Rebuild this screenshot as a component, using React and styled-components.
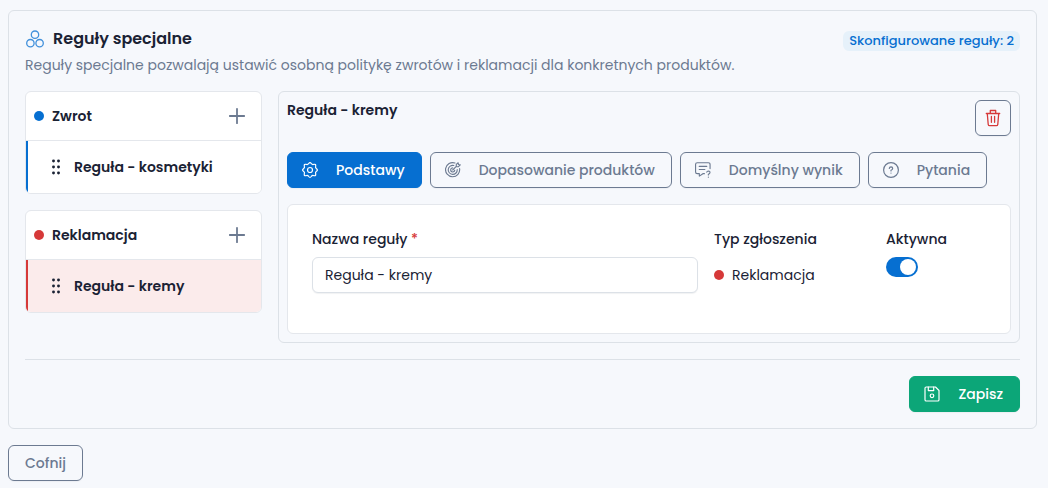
import React, { useState } from "react";
import styled, { createGlobalStyle, ThemeProvider } from "styled-components";

const theme = {
  page: "#f6f8fc",
  surface: "#ffffff",
  text: "#1a2234",
  muted: "#6c7a91",
  border: "#dce1e7",
  softBorder: "#e4e7ec",
  blue: "#066fd1",
  red: "#d63939",
  green: "#0ca678",
};

const GlobalStyle = createGlobalStyle`
  *, *::before, *::after { box-sizing: border-box; }
  body {
    margin: 0;
    background: ${theme.page};
    color: ${theme.text};
    font: 400 14px/20px Poppins, Inter, "Liberation Sans", sans-serif;
  }
  button, input { font: inherit; color: inherit; }
  h1, h2, h3, p, ul { margin: 0; padding: 0; font: inherit; list-style: none; }
`;

const Page = styled.main`
  display: flex;
  flex-direction: column;
  align-items: flex-start;
  gap: 16px;
  padding: 10px 11px 7px 8px;
`;

const Card = styled.section`
  width: 100%;
  padding: 16px;
  border: 1px solid ${(p) => p.theme.border};
  border-radius: 6px;
`;

const CardHeader = styled.header`
  display: flex;
  justify-content: space-between;
  align-items: flex-start;
  padding-bottom: 16px;
`;

const TitleRow = styled.div`
  display: flex;
  align-items: center;
  gap: 8px;
  height: 24px;
  color: ${(p) => p.theme.blue};
`;

const Title = styled.h1`
  color: ${(p) => p.theme.text};
  font-size: 16px;
  line-height: 24px;
  font-weight: 600;
`;

const Subtitle = styled.p`
  color: ${(p) => p.theme.muted};
  font-size: 14px;
  line-height: 20px;
  padding-top: 4px;
`;

const Badge = styled.span`
  flex: none;
  margin-top: 4px;
  padding: 0 6px;
  border-radius: 6px;
  background: #e6f1fa;
  color: ${(p) => p.theme.blue};
  font-size: 13px;
  line-height: 20px;
  font-weight: 500;
  font-variant-ligatures: none;
`;

const Columns = styled.div`
  display: grid;
  grid-template-columns: 237fr 742fr;
  gap: 16px;
  align-items: start;
`;

const Groups = styled.nav`
  display: flex;
  flex-direction: column;
  gap: 16px;
`;

const Group = styled.section`
  overflow: hidden;
  border: 1px solid ${(p) => p.theme.softBorder};
  border-radius: 6px;
  background: ${(p) => p.theme.surface};
`;

const GroupHeader = styled.div`
  display: flex;
  align-items: center;
  gap: 8px;
  height: 49px;
  padding: 0 12px 0 8px;
  border-bottom: 1px solid ${(p) => p.theme.softBorder};
`;

const GroupTitle = styled.h2`
  flex: 1;
  font-weight: 600;
`;

const Dot = styled.span`
  flex: none;
  width: 10px;
  height: 10px;
  border-radius: 50%;
  background: ${(p) => p.theme[p.$tone]};
`;

const AddButton = styled.button`
  display: grid;
  place-items: center;
  width: 24px;
  height: 24px;
  padding: 0;
  border: 0;
  background: none;
  color: ${(p) => p.theme.muted};
  cursor: pointer;
`;

const RuleItem = styled.button`
  display: flex;
  align-items: center;
  gap: 14px;
  width: 100%;
  height: 52px;
  padding: 0 16px 0 24px;
  border: 0;
  border-left: 2px solid ${(p) => p.theme[p.$tone]};
  background: ${(p) => (p.$active ? "#fbebeb" : p.theme.surface)};
  font-weight: 600;
  text-align: left;
  cursor: pointer;
`;

const Panel = styled.section`
  padding: 8px;
  border: 1px solid ${(p) => p.theme.border};
  border-radius: 6px;
`;

const PanelHeader = styled.div`
  display: flex;
  justify-content: space-between;
  align-items: flex-start;
`;

const PanelTitle = styled.h2`
  font-weight: 600;
`;

const Button = styled.button`
  display: inline-flex;
  align-items: center;
  gap: 18px;
  height: 36px;
  padding: 0 16px 0 14px;
  border: 1px solid ${(p) => p.theme.muted};
  border-radius: 6px;
  background: transparent;
  color: ${(p) => p.theme.muted};
  font-weight: 500;
  box-shadow: 0 1px 1px rgba(24, 36, 51, 0.04);
  cursor: pointer;

  &[aria-selected="true"] {
    border-color: ${(p) => p.theme.blue};
    background: ${(p) => p.theme.blue};
    color: #ffffff;
  }
`;

const SaveButton = styled(Button)`
  border-color: ${(p) => p.theme.green};
  background: ${(p) => p.theme.green};
  color: #ffffff;
`;

const BackButton = styled(Button)`
  padding: 0 16px;
`;

const DeleteButton = styled(Button)`
  justify-content: center;
  width: 36px;
  padding: 0;
  color: ${(p) => p.theme.red};
`;

const Tabs = styled.div`
  display: flex;
  flex-wrap: wrap;
  gap: 8px;
  padding: 16px 0;
`;

const Form = styled.div`
  display: grid;
  grid-template-columns: 386fr 156fr 100fr;
  gap: 16px;
  padding: 24px 24px 40px;
  border: 1px solid ${(p) => p.theme.softBorder};
  border-radius: 6px;
  background: ${(p) => p.theme.surface};
`;

const Field = styled.div`
  display: flex;
  flex-direction: column;
  align-items: flex-start;
  gap: 8px;
`;

const Label = styled.label`
  font-weight: 500;
`;

const Required = styled.span`
  color: ${(p) => p.theme.red};
`;

const TextInput = styled.input`
  width: 100%;
  height: 36px;
  padding: 0 12px;
  border: 1px solid ${(p) => p.theme.border};
  border-radius: 6px;
  background: ${(p) => p.theme.surface};
  box-shadow: 0 1px 1px rgba(24, 36, 51, 0.06);
`;

const TypeValue = styled.div`
  display: flex;
  align-items: center;
  gap: 8px;
  height: 36px;
`;

const Switch = styled.input`
  appearance: none;
  display: flex;
  align-items: center;
  width: 32px;
  height: 20px;
  margin: 0;
  padding: 0 2px;
  border-radius: 10px;
  background: ${(p) => p.theme.border};
  cursor: pointer;

  &::before {
    content: "";
    width: 16px;
    height: 16px;
    border-radius: 50%;
    background: #ffffff;
  }
  &:checked {
    justify-content: flex-end;
    background: ${(p) => p.theme.blue};
  }
`;

const Footer = styled.footer`
  display: flex;
  justify-content: flex-end;
  margin-top: 16px;
  padding-top: 16px;
  border-top: 1px solid ${(p) => p.theme.border};
`;

const Svg = styled.svg`
  flex: none;
  display: block;
  fill: none;
  stroke: currentColor;
  stroke-width: ${(p) => p.$stroke || 1.2};
  stroke-linecap: round;
  stroke-linejoin: round;
`;

const CirclesIcon = () => (
  <Svg width="20" height="18" viewBox="0 0 20 18" $stroke={1.3} opacity="0.75" aria-hidden="true">
    <circle cx="10" cy="4.700" r="3.700" />
    <circle cx="5.400" cy="13.200" r="3.700" />
    <circle cx="14.600" cy="13.200" r="3.700" />
  </Svg>
);

const PlusIcon = () => (
  <Svg width="18" height="18" viewBox="0 0 18 18" $stroke={1.8} aria-hidden="true">
    <path d="M9 1.800v14.400M1.800 9h14.400" />
  </Svg>
);

const GripIcon = () => (
  <Svg width="8" height="16" viewBox="0 0 8 16" aria-hidden="true">
    <g fill={theme.text} stroke="none">
      {[2, 8, 14].map((y) => (
        <React.Fragment key={y}>
          <circle cx="1.500" cy={y} r="1.450" />
          <circle cx="6.500" cy={y} r="1.450" />
        </React.Fragment>
      ))}
    </g>
  </Svg>
);

const GearIcon = () => (
  <Svg width="16" height="16" viewBox="0 0 16 16" aria-hidden="true">
    <circle cx="8" cy="8" r="2.500" />
    <path d="M6.700 1.500Q8 -.3 9.300 1.500Q10.300 3 12 2.300Q14 1.900 13.700 4Q13 5.700 14.500 6.700Q16.300 8 14.500 9.300Q13 10.300 13.700 12Q14 14.100 12 13.700Q10.300 13 9.300 14.500Q8 16.300 6.700 14.500Q5.700 13 4 13.700Q1.900 14.100 2.300 12Q3 10.300 1.500 9.300Q-.3 8 1.500 6.700Q3 5.700 2.300 4Q1.900 1.900 4 2.300Q5.700 3 6.700 1.500Z" />
  </Svg>
);

const TargetIcon = () => (
  <Svg width="16" height="16" viewBox="0 0 17 17" aria-hidden="true">
    <path d="M10.600 1.100A7.500 7.500 0 1 0 15.500 7" />
    <path d="M9.400 3.700A4.800 4.800 0 1 0 13 8" />
    <path d="M8.200 6.200A2.200 2.200 0 1 0 10.400 8.700" />
    <path d="M8.200 8.500L12 4.700M12 4.700V2.600L14 .8L14.300 2.700L16.200 3L14.300 5H12" />
  </Svg>
);

const MessageIcon = () => (
  <Svg width="16" height="16" viewBox="0 0 17 17" aria-hidden="true">
    <path d="M16 7V2.600Q16 .8 14.200.8H2.400Q.6.800.6 2.600V10.600Q.6 12.400 2.400 12.400H4.600V15L8.400 12.400H10" />
    <path d="M4.500 4.700H12.500M4.500 8H10.500" />
    <path d="M12.500 10.800Q12.800 9.500 14.200 9.500Q16 9.600 15.900 11.200Q15.700 12.300 14.200 13V13.800M14.200 16V16.100" />
  </Svg>
);

const QuestionIcon = () => (
  <Svg width="16" height="16" viewBox="0 0 16 16" aria-hidden="true">
    <circle cx="8" cy="8" r="7.400" />
    <path d="M6.300 6.400Q6.500 4.900 8 4.900Q9.700 5 9.700 6.500Q9.700 7.600 8 8.300V9M8 11V11.100" />
  </Svg>
);

const TrashIcon = () => (
  <Svg width="16" height="18" viewBox="0 0 16 18" $stroke={1.3} aria-hidden="true">
    <path d="M1.300 4.500H14.700M5.300 4.300V1.500H10.700V4.300M2.300 4.700L3.200 15.300Q3.400 16.700 4.700 16.700H11.300Q12.600 16.700 12.800 15.300L13.700 4.700M6.400 7.500V13.300M9.600 7.500V13.300" />
  </Svg>
);

const SaveIcon = () => (
  <Svg width="16" height="16" viewBox="0 0 16 16" aria-hidden="true">
    <path d="M2.300 1H11.500L15 4.500V13.700Q15 15 13.700 15H2.300Q1 15 1 13.700V2.300Q1 1 2.300 1Z" />
    <path d="M4.300 1V4.600H9.700V1" />
    <circle cx="8" cy="9.800" r="1.800" />
  </Svg>
);

const groups = [
  { name: "Zwrot", tone: "blue", rules: ["Reguła - kosmetyki"] },
  { name: "Reklamacja", tone: "red", rules: ["Reguła - kremy"] },
];

const tabs = [
  { label: "Podstawy", Icon: GearIcon },
  { label: "Dopasowanie produktów", Icon: TargetIcon },
  { label: "Domyślny wynik", Icon: MessageIcon },
  { label: "Pytania", Icon: QuestionIcon },
];

export default function App() {
  const [tab, setTab] = useState("Podstawy");
  return (
    <ThemeProvider theme={theme}>
      <GlobalStyle />
      <Page>
        <Card>
          <CardHeader>
            <div>
              <TitleRow>
                <CirclesIcon />
                <Title>Reguły specjalne</Title>
              </TitleRow>
              <Subtitle>
                Reguły specjalne pozwalają ustawić osobną politykę zwrotów i reklamacji dla konkretnych produktów.
              </Subtitle>
            </div>
            <Badge>Skonfigurowane reguły: 2</Badge>
          </CardHeader>
          <Columns>
            <Groups>
              {groups.map((group) => (
                <Group key={group.name}>
                  <GroupHeader>
                    <Dot $tone={group.tone} />
                    <GroupTitle>{group.name}</GroupTitle>
                    <AddButton type="button" aria-label="Dodaj regułę">
                      <PlusIcon />
                    </AddButton>
                  </GroupHeader>
                  {group.rules.map((rule) => (
                    <RuleItem key={rule} type="button" $tone={group.tone} $active={rule === "Reguła - kremy"}>
                      <GripIcon />
                      {rule}
                    </RuleItem>
                  ))}
                </Group>
              ))}
            </Groups>
            <Panel>
              <PanelHeader>
                <PanelTitle>Reguła - kremy</PanelTitle>
                <DeleteButton type="button" aria-label="Usuń regułę">
                  <TrashIcon />
                </DeleteButton>
              </PanelHeader>
              <Tabs role="tablist">
                {tabs.map(({ label, Icon }) => (
                  <Button
                    key={label}
                    type="button"
                    role="tab"
                    aria-selected={tab === label}
                    onClick={() => setTab(label)}
                  >
                    <Icon />
                    {label}
                  </Button>
                ))}
              </Tabs>
              <Form>
                <Field>
                  <Label htmlFor="rule-name">
                    Nazwa reguły <Required>*</Required>
                  </Label>
                  <TextInput id="rule-name" type="text" defaultValue="Reguła - kremy" required />
                </Field>
                <Field>
                  <Label as="span">Typ zgłoszenia</Label>
                  <TypeValue>
                    <Dot $tone="red" />
                    Reklamacja
                  </TypeValue>
                </Field>
                <Field>
                  <Label htmlFor="rule-active">Aktywna</Label>
                  <Switch id="rule-active" type="checkbox" role="switch" defaultChecked />
                </Field>
              </Form>
            </Panel>
          </Columns>
          <Footer>
            <SaveButton type="button">
              <SaveIcon />
              Zapisz
            </SaveButton>
          </Footer>
        </Card>
        <BackButton type="button">Cofnij</BackButton>
      </Page>
    </ThemeProvider>
  );
}
